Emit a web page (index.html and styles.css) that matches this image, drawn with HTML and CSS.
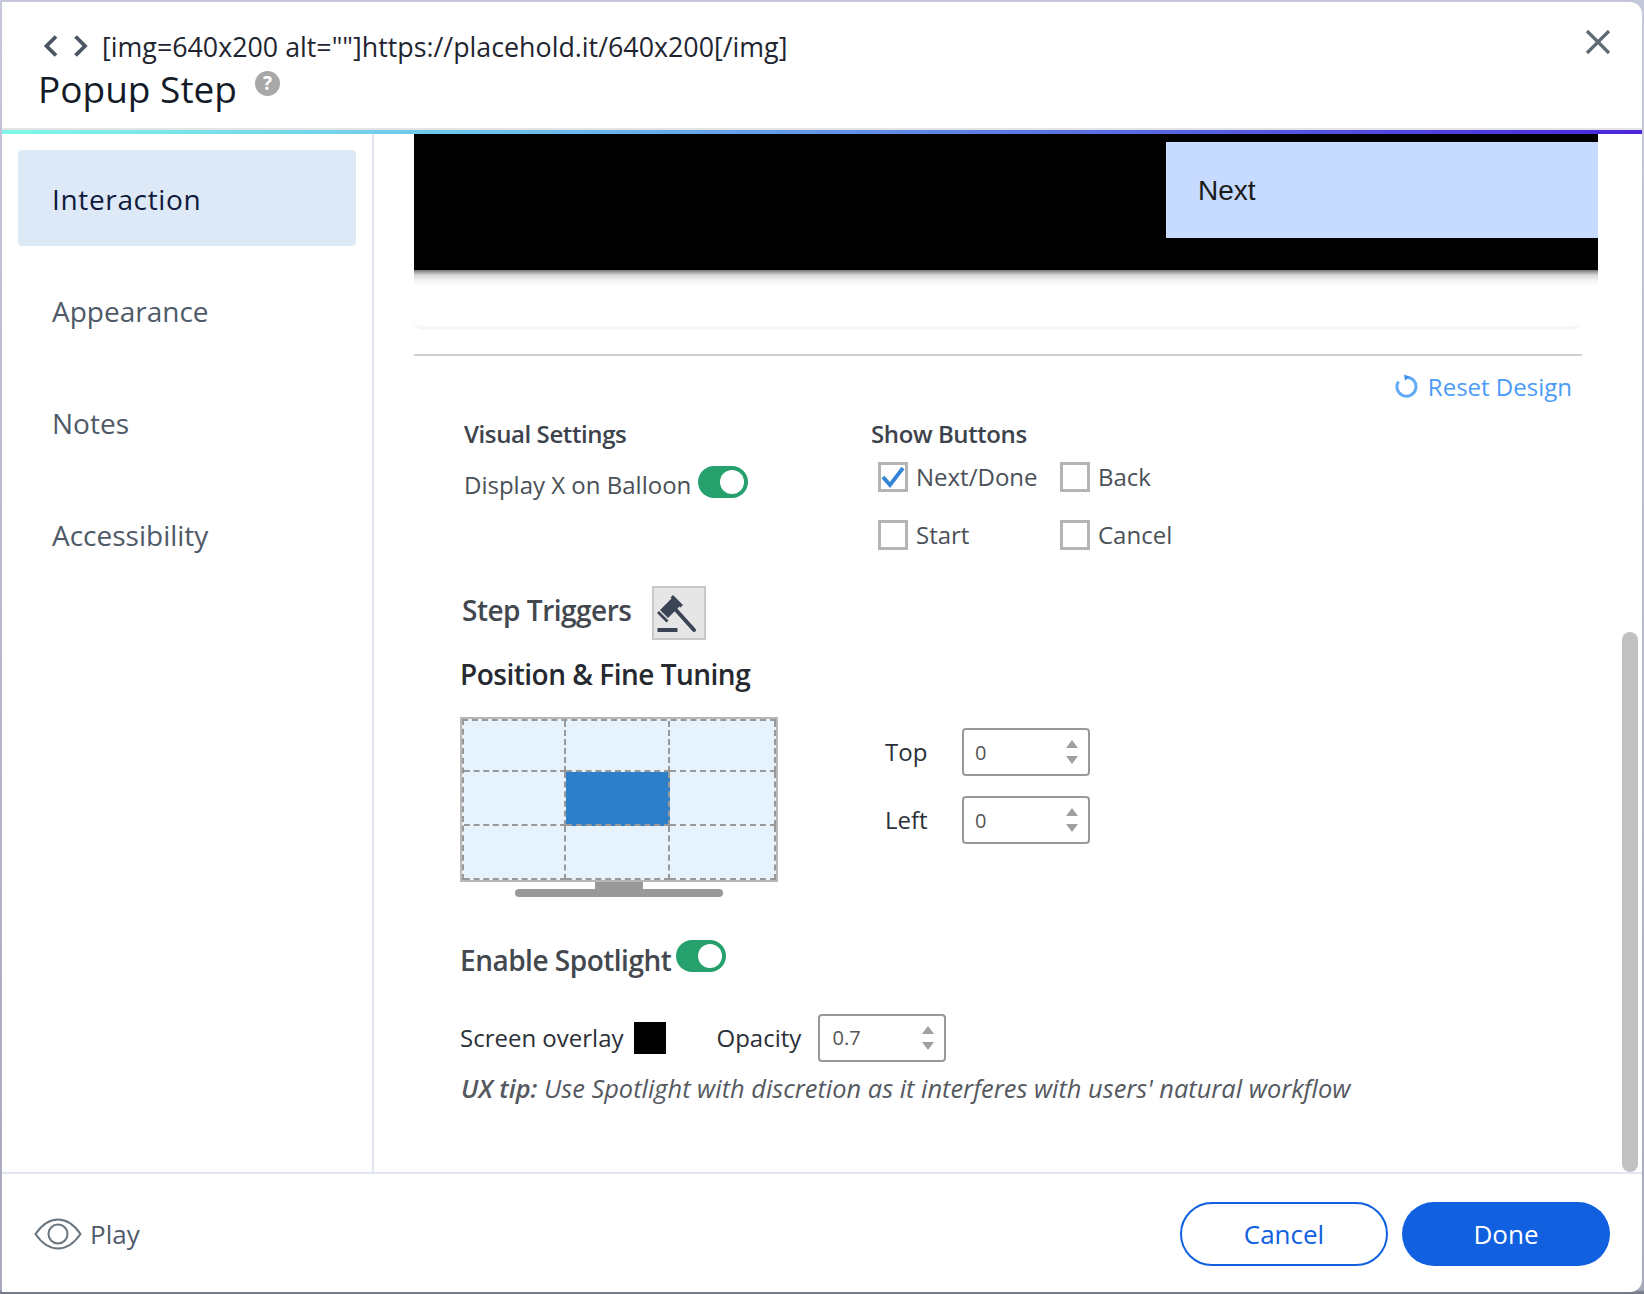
FILE: index.html
```html
<!DOCTYPE html>
<html>
<head>
    <title>Popup Step</title>
    <link rel="stylesheet" href="styles.css">
</head>
<body>
    <div class="modal">
        <header class="modal-header">
            <div class="crumb">
                <svg class="chevrons" width="46" height="24" viewBox="0 0 46 24"><path d="M13 2.500 3.500 12l9.500 9.500M32.500 2.500 42 12l-9.500 9.500" fill="none" stroke="#4b5563" stroke-width="3.800"/></svg>
                <span>[img=640x200 alt=""]https://placehold.it/640x200[/img]</span>
            </div>
            <div class="title-row">
                <h1>Popup Step</h1>
                <span class="help">?</span>
            </div>
            <svg class="close" width="26" height="26" viewBox="0 0 26 26"><path d="M2 2l22 22M24 2 2 24" stroke="#5f6b73" stroke-width="3.2" fill="none"/></svg>
        </header>
        <div class="rainbow"></div>

        <div class="modal-body">
            <nav class="sidebar">
                <a class="nav-item active">Interaction</a>
                <a class="nav-item">Appearance</a>
                <a class="nav-item">Notes</a>
                <a class="nav-item">Accessibility</a>
            </nav>

            <main class="content">
                <div class="preview">
                    <div class="preview-next">Next</div>
                </div>
                <div class="preview-shadow"></div>
                <div class="preview-foot"></div>
                <hr class="divider">

                <div class="reset-row">
                    <svg width="24" height="26" viewBox="0 0 24 26"><path d="M11 4.200a9.500 9.500 0 1 1-7.500 4.300" fill="none" stroke="#62abf6" stroke-width="3"/><path d="M9 1.500l6 2.500-5 3.500z" fill="#3f8fe8"/></svg>
                    <span>Reset Design</span>
                </div>

                <section class="settings">
                    <div class="visual">
                        <h3>Visual Settings</h3>
                        <div class="balloon-row">
                            <span class="balloon-text">Display X on Balloon</span>
                            <span class="toggle"></span>
                        </div>
                    </div>
                    <div class="buttons">
                        <h3>Show Buttons</h3>
                        <div class="check-grid">
                            <label class="check"><span class="box"><svg width="24" height="24" viewBox="0 0 24 24"><path d="M2 12l7 8L22 3" fill="none" stroke="#3585d6" stroke-width="3.800"/></svg></span><span class="check-text">Next/Done</span></label>
                            <label class="check"><span class="box"></span><span class="check-text">Back</span></label>
                            <label class="check"><span class="box"></span><span class="check-text">Start</span></label>
                            <label class="check"><span class="box"></span><span class="check-text">Cancel</span></label>
                        </div>
                    </div>
                </section>

                <div class="triggers">
                    <h2 class="light">Step Triggers</h2>
                    <span class="gavel">
                        <svg width="50" height="50" viewBox="2 2 50 50">
                            <path d="M21 9l10 10-2.500 2.500-10-10zM19.500 12.500l8 8L16 32l-8-8zM7 25l9.500 9.500-2 2L5 27z" fill="#3a4454"/>
                            <path d="M24 24l18 20" stroke="#3a4454" stroke-width="4" stroke-linecap="round"/>
                            <path d="M5.500 42h20v4h-20z" fill="#3a4454"/>
                        </svg>
                    </span>
                </div>

                <h2 class="tuning-title">Position &amp; Fine Tuning</h2>

                <div class="tuning">
                    <div class="monitor">
                        <div class="screen">
                            <div class="grid">
                                <span class="cell"></span><span class="cell"></span><span class="cell"></span>
                                <span class="cell"></span><span class="cell on"></span><span class="cell"></span>
                                <span class="cell"></span><span class="cell"></span><span class="cell"></span>
                            </div>
                        </div>
                        <div class="neck"></div>
                        <div class="stand"></div>
                    </div>
                    <div class="offsets">
                        <div class="offset-row">
                            <span class="offset-label">Top</span>
                            <span class="num"><span>0</span><i class="spin"></i></span>
                        </div>
                        <div class="offset-row">
                            <span class="offset-label">Left</span>
                            <span class="num"><span>0</span><i class="spin"></i></span>
                        </div>
                    </div>
                </div>

                <div class="spot-row">
                    <h2 class="light">Enable Spotlight</h2>
                    <span class="toggle"></span>
                </div>

                <div class="overlay-row">
                    <span>Screen overlay</span>
                    <span class="swatch"></span>
                    <span class="opacity-label">Opacity</span>
                    <span class="num num-opacity"><span>0.7</span><i class="spin"></i></span>
                </div>

                <p class="tip"><b>UX tip:</b> Use Spotlight with discretion as it interferes with users' natural workflow</p>

                <div class="thumb"></div>
            </main>
        </div>

        <footer class="modal-footer">
            <div class="play">
                <svg width="48" height="32" viewBox="0 0 48 32"><path d="M1.500 16C8 6.500 15.500 1.500 24 1.500S40 6.500 46.500 16C40 25.500 32.500 30.500 24 30.500S8 25.500 1.500 16z" fill="none" stroke="#68757f" stroke-width="2"/><circle cx="24" cy="16" r="9.500" fill="none" stroke="#68757f" stroke-width="2"/></svg>
                <span>Play</span>
            </div>
            <div class="actions">
                <button class="btn btn-outline">Cancel</button>
                <button class="btn btn-fill">Done</button>
            </div>
        </footer>
    </div>
</body>
</html>
```

FILE: styles.css
```css
* {
    box-sizing: border-box;
}

html,
body {
    margin: 0;
    height: 100%;
}

body {
    padding: 2px;
    background: linear-gradient(#c4c8da 0, #a6aabc 1290px, #777a88 1292px);
    font-family: "Open Sans", sans-serif;
    overflow: hidden;
}

.modal {
    display: flex;
    flex-direction: column;
    height: 1290px;
    background-color: #fff;
    border-radius: 0 12px 12px 0;
    overflow: hidden;
}

/* header */
.modal-header {
    position: relative;
    height: 128px;
    padding: 30px 0 0 41px;
    border-bottom: 2px solid #e4e4e4;
}

.crumb {
    display: flex;
    align-items: center;
    gap: 13px;
    height: 28px;
    font-size: 26.8px;
    color: #1f2530;
}

.title-row {
    display: flex;
    align-items: flex-start;
    gap: 18px;
    margin: 4px 0 0 -5px;
}

h1 {
    margin: 0;
    font-size: 37px;
    line-height: 50px;
    font-weight: 500;
    color: #141b28;
}

.help {
    width: 25px;
    height: 25px;
    margin-top: 7px;
    border-radius: 50%;
    background-color: #a8a8a8;
    color: #fff;
    font-size: 19px;
    font-weight: 700;
    line-height: 25px;
    text-align: center;
}

.close {
    position: absolute;
    top: 27px;
    right: 31px;
}

.rainbow {
    height: 4px;
    background: linear-gradient(90deg, #7ff8e8 0%, #6ab8ec 35%, #5a72e4 65%, #4a25dc 100%);
}

/* body */
.modal-body {
    display: flex;
    flex: 1;
    min-height: 0;
}

.sidebar {
    width: 372px;
    padding: 16px 16px 0;
    border-right: 2px solid #e2e6f2;
}

.nav-item {
    display: block;
    height: 96px;
    margin-bottom: 16px;
    padding-left: 34px;
    border-radius: 4px;
    font-size: 28px;
    line-height: 98px;
    color: #4f5a68;
}

.nav-item.active {
    background-color: #dee9f8;
    color: #0f1a3c;
    font-weight: 500;
    letter-spacing: 0.65px;
}

.content {
    position: relative;
    flex: 1;
    padding-left: 40px;
    overflow: hidden;
}

.preview {
    display: flex;
    justify-content: flex-end;
    width: 1184px;
    height: 136px;
    padding-top: 8px;
    background-color: #000;
}

.preview-next {
    width: 432px;
    height: 96px;
    padding-left: 32px;
    background-color: #c7daff;
    font-family: "Liberation Sans", Arial, sans-serif;
    font-size: 28px;
    line-height: 98px;
    color: #1a1a1a;
}

.preview-shadow {
    width: 1184px;
    height: 16px;
    background: linear-gradient(#777 0, #d8d8d8 5px, #f6f6f6 11px, #fff 16px);
}

.preview-foot {
    width: 1166px;
    height: 44px;
    border-bottom: 4px solid #f6f6f6;
    border-radius: 0 0 8px 8px;
}

.divider {
    width: 1168px;
    margin: 24px 0 0;
    border: 0;
    border-top: 2px solid #d0d0d0;
}

.reset-row {
    display: flex;
    justify-content: flex-end;
    align-items: center;
    gap: 9px;
    width: 1158px;
    height: 28px;
    margin-top: 16px;
    font-size: 24px;
    color: #4a9cf8;
}

h3 {
    margin: 0;
    font-size: 24px;
    line-height: 31px;
    font-weight: 600;
    letter-spacing: -0.4px;
    color: #3d434c;
}

h2 {
    margin: 0;
    font-size: 28px;
    line-height: 38px;
    font-weight: 600;
    letter-spacing: -0.5px;
    color: #26292f;
}

h2.light {
    color: #43484f;
}

.settings {
    display: flex;
    margin: 18px 0 0 50px;
}

.visual {
    width: 407px;
}

.balloon-row {
    display: flex;
    align-items: flex-start;
    gap: 7px;
    margin-top: 17px;
    font-size: 24px;
    color: #4a5058;
}

.balloon-text {
    margin-top: 2px;
}

.toggle {
    position: relative;
    width: 50px;
    height: 32px;
    border-radius: 16px;
    background-color: #26a06c;
}

.toggle::after {
    content: "";
    position: absolute;
    top: 4px;
    right: 4px;
    width: 24px;
    height: 24px;
    border-radius: 50%;
    background-color: #fff;
}

.check-grid {
    display: grid;
    grid-template-columns: 182px auto;
    grid-auto-rows: 30px;
    row-gap: 28px;
    margin: 13px 0 0 7px;
}

.check {
    display: flex;
    align-items: center;
    gap: 8px;
    font-size: 24px;
    color: #4a5058;
}

.check-text {
    margin-bottom: 2px;
}

.box {
    width: 30px;
    height: 30px;
    border: 3px solid #b4b4b4;
}

.box svg {
    display: block;
}

.triggers {
    display: flex;
    align-items: center;
    gap: 21px;
    margin: 36px 0 0 48px;
}

.triggers h2 {
    margin-bottom: 6px;
}

.gavel {
    display: flex;
    align-items: center;
    justify-content: center;
    width: 54px;
    height: 54px;
    border: 2px solid #c8c8c8;
    background-color: #e6e6e6;
}

.tuning-title {
    margin: 15px 0 0 46px;
}

.tuning {
    display: flex;
    margin: 24px 0 0 46px;
}

.monitor {
    display: flex;
    flex-direction: column;
    align-items: center;
    width: 318px;
}

.screen {
    width: 318px;
    height: 165px;
    border: 2px solid #b8b8b8;
    background-color: #e6f3fd;
}

.grid {
    display: grid;
    grid-template-columns: 102px 104px 1fr;
    grid-template-rows: 51px 54px 1fr;
    height: 100%;
    border-top: 2px dashed #999;
    border-left: 2px dashed #999;
}

.cell {
    border-right: 2px dashed #999;
    border-bottom: 2px dashed #999;
}

.cell.on {
    background-color: #2d7fca;
}

.neck {
    width: 48px;
    height: 7px;
    background-color: #999;
}

.stand {
    width: 208px;
    height: 8px;
    border-radius: 4px;
    background-color: #999;
}

.offsets {
    margin: 11px 0 0 107px;
}

.offset-row {
    display: flex;
    align-items: center;
    height: 48px;
    margin-bottom: 20px;
}

.offset-label {
    width: 77px;
    margin-bottom: 2px;
    font-size: 24px;
    color: #2b3038;
}

.num {
    position: relative;
    display: flex;
    align-items: center;
    width: 128px;
    height: 48px;
    padding-left: 11px;
    border: 2px solid #999;
    border-radius: 4px;
    font-size: 20px;
    color: #555;
}

.num-opacity {
    padding-left: 13px;
}

.spin {
    position: absolute;
    top: 10px;
    right: 10px;
    border-left: 6px solid transparent;
    border-right: 6px solid transparent;
    border-bottom: 8px solid #a0a0a0;
}

.spin::after {
    content: "";
    position: absolute;
    top: 16px;
    left: -6px;
    border-left: 6px solid transparent;
    border-right: 6px solid transparent;
    border-top: 8px solid #a0a0a0;
}

.spot-row {
    display: flex;
    align-items: flex-start;
    gap: 5px;
    margin: 43px 0 0 46px;
}

.spot-row h2 {
    margin-top: 1px;
}

.overlay-row {
    display: flex;
    align-items: center;
    margin: 35px 0 0 46px;
    height: 47px;
    font-size: 24px;
    color: #2b3038;
}

.swatch {
    width: 32px;
    height: 32px;
    margin: 0 51px 0 10px;
    background-color: #000;
}

.opacity-label {
    width: 101px;
}

.tip {
    margin: 10px 0 0 47px;
    font-size: 25.4px;
    font-style: italic;
    color: #55595f;
}

.tip b {
    font-weight: 600;
}

.thumb {
    position: absolute;
    top: 498px;
    right: 4px;
    bottom: 0;
    width: 16px;
    border-radius: 8px;
    background-color: #c1c1c1;
}

/* footer */
.modal-footer {
    display: flex;
    align-items: center;
    justify-content: space-between;
    height: 120px;
    padding: 2px 32px 0;
    border-top: 2px solid #e2e6f2;
}

.play {
    display: flex;
    align-items: center;
    gap: 8px;
    font-size: 26px;
    color: #515c6b;
}

.actions {
    display: flex;
    gap: 14px;
}

.btn {
    width: 208px;
    height: 64px;
    border-radius: 32px;
    font-family: "Open Sans", sans-serif;
    font-size: 26px;
}

.btn-outline {
    border: 2px solid #1060e0;
    background-color: #fff;
    color: #1060e0;
}

.btn-fill {
    border: 0;
    background-color: #1060e0;
    color: #fff;
}
```
